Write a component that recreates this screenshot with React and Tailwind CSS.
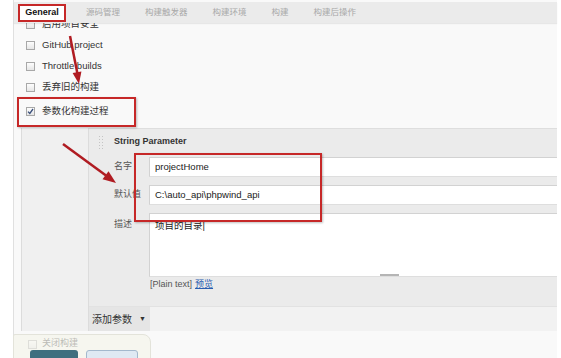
import React from 'react';

const font = "font-['Liberation_Sans','Noto_Sans_CJK_SC',sans-serif]";

const Check = ({ checked }) => (
    <span className="w-[9px] h-[9px] shrink-0 border border-[#a8a8a8] bg-gradient-to-b from-[#fdfdfd] to-[#e6e6e6] flex items-center justify-center">
        {checked && (
            <svg width="7" height="7" viewBox="0 0 7 7">
                <path d="M1 3.6 L2.8 5.5 L6 1" fill="none" stroke="#3a4f7a" strokeWidth="1.3" />
            </svg>
        )}
    </span>
);

const Row = ({ label, checked, className = '' }) => (
    <div className={`h-[21px] pl-[12px] flex items-center gap-[7px] text-[9.5px] text-[#333] ${className}`}>
        <Check checked={checked} />
        <span>{label}</span>
    </div>
);

const tabs = ['源码管理', '构建触发器', '构建环境', '构建', '构建后操作'];

export default function App() {
    return (
        <div className={`relative w-[561px] h-[358px] overflow-hidden bg-white ${font}`}>
            <div className="ml-[13px] w-[544px] h-full bg-[#f9f9f9] border-l border-[#e0e0e0] flex flex-col">
                {/* Tabs */}
                <div className="relative z-10 mt-[2px] h-[21px] shrink-0 bg-[#ebebeb] flex items-center shadow-[0_1px_1px_rgba(0,0,0,0.07)]">
                    <div className="ml-[4px] w-[48px] h-[18px] border-2 border-[#c62828] bg-white flex items-center justify-center text-[9px] font-bold text-[#111]">
                        General
                    </div>
                    <div className="ml-[20px] flex gap-[25px] text-[8.5px] text-[#a8a8a8]">
                        {tabs.map(t => <span key={t}>{t}</span>)}
                    </div>
                </div>

                {/* Options */}
                <div className="-mt-[9px] flex flex-col">
                    <Row label="启用项目安全" />
                    <Row label="GitHub project" />
                    <Row label="Throttle builds" />
                    <Row label="丢弃旧的构建" />
                    <Row label="参数化构建过程" checked className="mt-[2px] h-[22px]" />
                </div>

                {/* Parameters */}
                <div className="mt-[6px] flex">
                    <div className="ml-[7px] w-[68px] bg-[#f0f0f0] border-l border-r border-[#dcdcdc]" />
                    <div className="flex-1 flex flex-col">
                        <div className="bg-[#ebebeb] border-t border-[#dedede] flex flex-col pb-[13px]">
                            <div className="h-[26px] flex items-center">
                                <span className="ml-[9px] w-[7px] h-[14px] bg-[radial-gradient(#c4c4c4_0.8px,transparent_0.8px)] bg-[length:3px_3px]" />
                                <span className="ml-[9px] text-[9px] font-bold text-[#333]">String Parameter</span>
                            </div>
                            <div className="mt-[2px] flex items-center">
                                <span className="w-[60px] pl-[25px] text-[9px] text-[#555]">名字</span>
                                <div className="flex-1 h-[20px] bg-white border-t border-l border-b border-[#d2d2d2] border-b-[#dedede] pl-[5px] flex items-center text-[9.5px] text-[#222]">projectHome</div>
                            </div>
                            <div className="mt-[8px] flex items-center">
                                <span className="w-[60px] pl-[25px] text-[9px] text-[#555]">默认值</span>
                                <div className="flex-1 h-[20px] bg-white border-t border-l border-b border-[#d2d2d2] border-b-[#dedede] pl-[5px] flex items-center text-[9.5px] text-[#222]">C:\auto_api\phpwind_api</div>
                            </div>
                            <div className="mt-[8px] flex items-start">
                                <span className="w-[60px] pl-[25px] pt-[5px] text-[9px] text-[#555]">描述</span>
                                <div className="flex-1 h-[64px] bg-white border-t border-l border-b border-[#d2d2d2] border-b-[#dedede] pl-[5px] pt-[5px] flex flex-col">
                                    <span className="text-[9.5px] text-[#222]">项目的目录|</span>
                                    <span className="mt-auto ml-[225px] w-[19px] h-[2px] bg-[#b5b5b5]" />
                                </div>
                            </div>
                            <div className="ml-[61px] h-[16px] flex items-center gap-[3px] text-[9px] text-[#555]">
                                <span>[Plain text]</span>
                                <span className="text-[#2a5db0] underline">预览</span>
                            </div>
                        </div>
                        <div className="h-[25px] border-t border-[#e2e2e2] bg-[#f2f2f2] flex">
                            <div className="w-[61px] bg-[#e5e5e5] flex items-center pl-[3px] gap-[7px] text-[10px] text-[#333]">
                                <span>添加参数</span>
                                <span className="text-[7px]">▼</span>
                            </div>
                        </div>
                    </div>
                </div>

                {/* Sticky footer */}
                <div className="mt-[3px] -ml-[1px] w-[138px] flex-1 bg-[#f6f6ef] border border-[#e3e3da] rounded-tr-[8px] rounded-tl-[2px] flex flex-col">
                    <div className="mt-[3px] h-[12px] pl-[14px] flex items-center gap-[5px] text-[9px] text-[#333] opacity-30">
                        <Check />
                        <span>关闭构建</span>
                    </div>
                    <div className="mt-[0px] flex gap-[8px] pl-[16px]">
                        <span className="w-[48px] h-[12px] bg-[#3f6f7f] rounded-t-[3px]" />
                        <span className="w-[52px] h-[12px] bg-[#dfe9f3] border border-[#a3b8cd] rounded-t-[3px]" />
                    </div>
                </div>
            </div>

            {/* Annotations */}
            <div className="absolute left-[17px] top-[97px] w-[119px] h-[30px] border-2 border-[#c62828] shadow-[1px_1px_2px_rgba(0,0,0,0.25)] pointer-events-none" />
            <div className="absolute left-[134px] top-[153px] w-[188px] h-[69px] border-2 border-[#c62828] shadow-[1px_1px_2px_rgba(0,0,0,0.25)] pointer-events-none" />
            <svg className="absolute left-0 top-0 pointer-events-none" width="561" height="358">
                <line x1="70" y1="36" x2="77.3" y2="73" stroke="#b01c22" strokeWidth="2.5" />
                <polygon points="79,84 81.4,71.5 72.6,72.9" fill="#b01c22" />
                <line x1="63" y1="144" x2="106" y2="175.5" stroke="#b01c22" strokeWidth="2.5" />
                <polygon points="116,183 108.5,171.3 102.5,179.3" fill="#b01c22" />
            </svg>
        </div>
    );
}
